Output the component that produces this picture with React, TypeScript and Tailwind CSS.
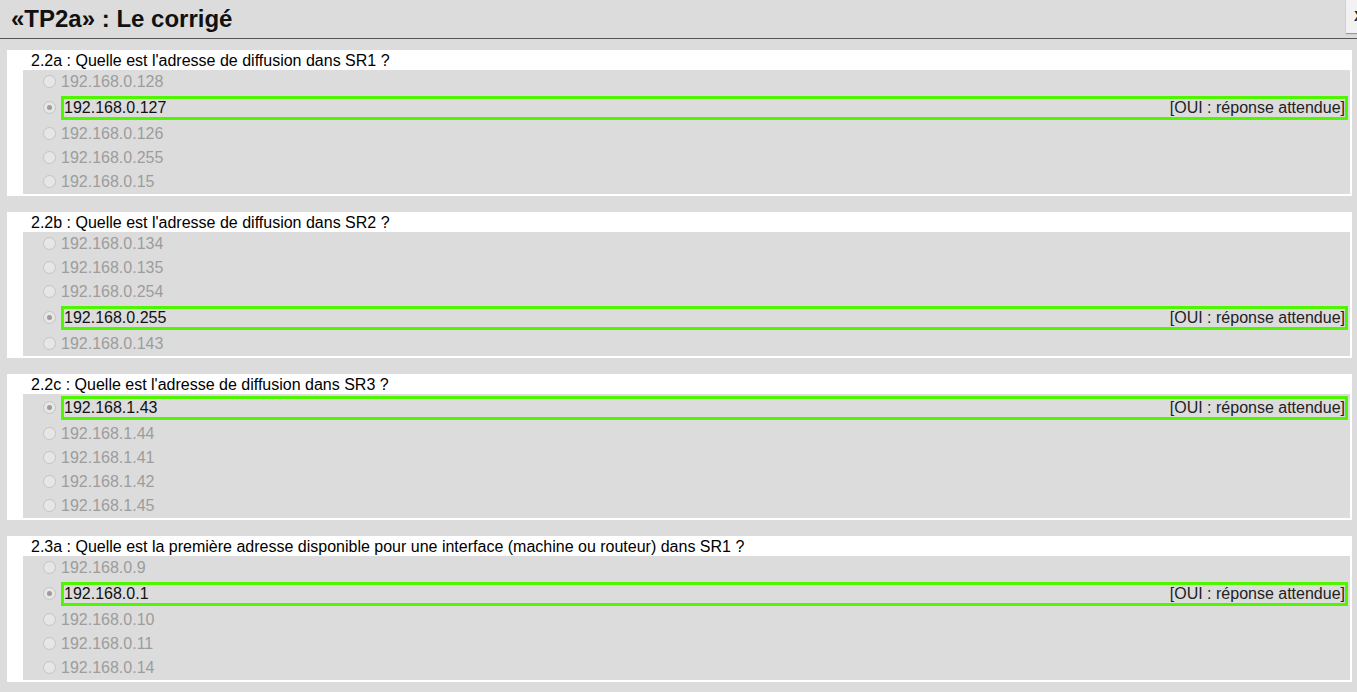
import React from 'react'

interface Question {
  label: string
  options: string[]
  answer: number
}

const questions: Question[] = [
  {
    label: "2.2a : Quelle est l'adresse de diffusion dans SR1 ?",
    options: ['192.168.0.128', '192.168.0.127', '192.168.0.126', '192.168.0.255', '192.168.0.15'],
    answer: 1
  },
  {
    label: "2.2b : Quelle est l'adresse de diffusion dans SR2 ?",
    options: ['192.168.0.134', '192.168.0.135', '192.168.0.254', '192.168.0.255', '192.168.0.143'],
    answer: 3
  },
  {
    label: "2.2c : Quelle est l'adresse de diffusion dans SR3 ?",
    options: ['192.168.1.43', '192.168.1.44', '192.168.1.41', '192.168.1.42', '192.168.1.45'],
    answer: 0
  },
  {
    label: '2.3a : Quelle est la première adresse disponible pour une interface (machine ou routeur) dans SR1 ?',
    options: ['192.168.0.9', '192.168.0.1', '192.168.0.10', '192.168.0.11', '192.168.0.14'],
    answer: 1
  }
]

const Radio: React.FC<{ checked: boolean }> = ({ checked }) => (
  <span className="ml-[20px] mb-[1px] w-[13px] h-[13px] shrink-0 rounded-full border border-[#c4c4c4] bg-[#e6e6e6] flex items-center justify-center">
    {checked && <span className="w-[5px] h-[5px] rounded-full bg-[#9c9c9c]" />}
  </span>
)

const Option: React.FC<{ text: string; correct: boolean }> = ({ text, correct }) => {
  if (correct) {
    return (
      <div className="flex items-center h-[28px]">
        <Radio checked />
        <div className="ml-[5px] mr-[2px] flex-1 h-[24px] border-[3px] border-[#50f500] flex items-center justify-between text-[#111]">
          <span>{text}</span>
          <span className="text-[#222]">[OUI : réponse attendue]</span>
        </div>
      </div>
    )
  }
  return (
    <div className="flex items-center h-[24px]">
      <Radio checked={false} />
      <span className="ml-[5px] text-[#9c9c9c]">{text}</span>
    </div>
  )
}

const QuestionCard: React.FC<{ q: Question }> = ({ q }) => (
  <div className="bg-white ml-[7px] mr-[5px] pb-[2px]">
    <div className="h-[20px] leading-[21px] pl-[24px] text-black">{q.label}</div>
    <div className="ml-[16px] mr-[2px] bg-[#dcdcdc]">
      {q.options.map((opt, i) => (
        <Option key={opt} text={opt} correct={i === q.answer} />
      ))}
    </div>
  </div>
)

export default function App() {
  return (
    <div
      className="min-h-[692px] bg-[#dcdcdc] text-[16px] overflow-hidden"
      style={{ fontFamily: '"Liberation Sans", Arial, sans-serif' }}
    >
      <div className="h-[39px] border-b border-[#555] flex items-start overflow-hidden">
        <h1 className="pl-[11px] h-[38px] flex items-center text-[24px] font-bold text-[#111]">
          «TP2a» : Le corrigé
        </h1>
        <button className="ml-auto w-[11px] h-[33px] shrink-0 overflow-hidden bg-[#f2f2f2] shadow-[0_1px_1px_#999] text-left pl-[8px] text-[15px] font-bold text-[#222]">
          X
        </button>
      </div>
      <div className="pt-[11px] flex flex-col gap-[16px] pb-[10px]">
        {questions.map(q => (
          <QuestionCard key={q.label} q={q} />
        ))}
      </div>
    </div>
  )
}
